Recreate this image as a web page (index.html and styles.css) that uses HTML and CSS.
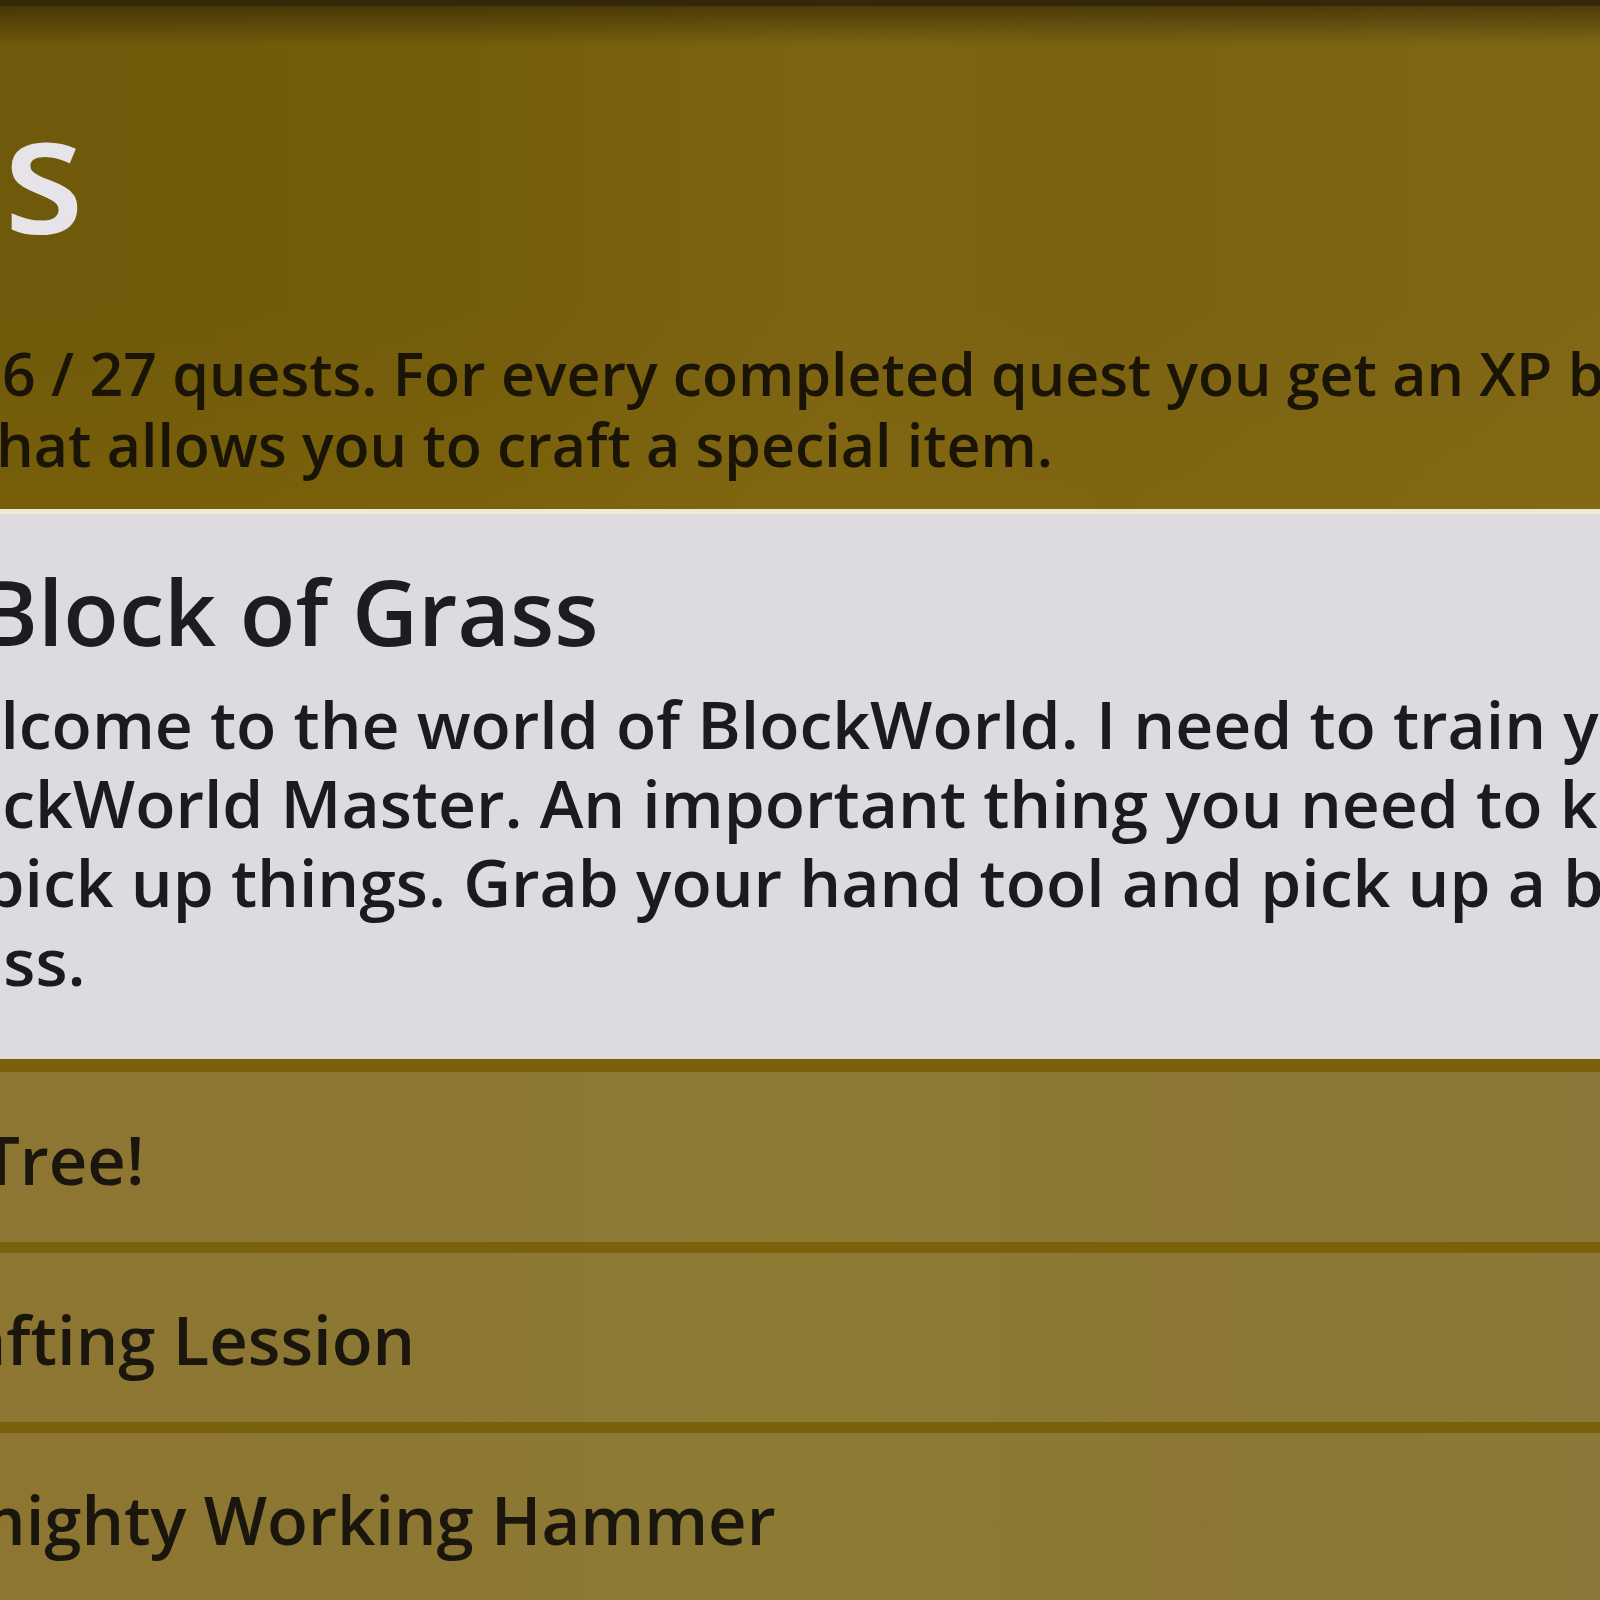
FILE: index.html
```html
<!DOCTYPE html>
<html lang="en">
<head>
<meta charset="utf-8">
<title>Quests</title>
<link rel="stylesheet" href="styles.css">
</head>
<body>
<div class="screen">
  <header class="top">
    <div class="title-wrap"><h1 class="title">Quests</h1></div>
    <p class="intro">6 / 27 quests. For every completed quest you get an XP bonus<br>that allows you to craft a special item.</p>
  </header>
  <section class="card">
    <h2 class="card-title">Block of Grass</h2>
    <p class="card-text">Welcome to the world of BlockWorld. I need to train you to become a<br>BlockWorld Master. An important thing you need to know is how<br>to pick up things. Grab your hand tool and pick up a block of<br>grass.</p>
  </section>
  <ul class="quest-list">
    <li class="quest-row"><span class="quest-label cut-tree">Tree!</span></li>
    <li class="quest-row"><span class="quest-label cut-craft">Crafting Lession</span></li>
    <li class="quest-row"><span class="quest-label cut-hammer">A mighty Working Hammer</span></li>
  </ul>
</div>
</body>
</html>
```
FILE: styles.css
```css
html, body {
  margin: 0;
  padding: 0;
}

body {
  width: 1600px;
  height: 1600px;
  overflow: hidden;
  background: #8b7632;
  font-family: "Open Sans", "DejaVu Sans", sans-serif;
}

.screen {
  display: flex;
  flex-direction: column;
  width: 1600px;
}

.top {
  border-top: 6px solid #35280a;
  padding: 81px 0 29px;
  background:
    linear-gradient(180deg, rgba(45, 32, 4, 0.6) 0, rgba(45, 32, 4, 0) 40px),
    linear-gradient(180deg, rgba(0, 0, 0, 0) 60%, rgba(140, 110, 10, 0.25) 100%),
    linear-gradient(90deg, #6f590a 0%, #745d0c 30%, #7d6413 52%, #7a6212 70%, #806717 100%);
}

.title-wrap {
  display: flex;
  justify-content: flex-end;
  width: 84px;
}

.title {
  margin: 0;
  font-size: 165px;
  line-height: 165px;
  font-weight: 600;
  color: #e6e4e8;
  white-space: nowrap;
}

.intro {
  margin: 86px 0 0 -27px;
  text-indent: 29px;
  font-size: 59px;
  line-height: 71px;
  font-weight: 600;
  color: #191406;
  white-space: nowrap;
}

.card {
  background: #dddbdf;
  border-top: 5px solid #efe8d3;
  border-bottom: 13px solid #7a610a;
  padding: 48px 0 59px;
}

.card-title {
  margin: 0 0 23px -22px;
  font-size: 91px;
  line-height: 99px;
  font-weight: 600;
  color: #1e1c1f;
  white-space: nowrap;
}

.card-text {
  margin: 0 0 0 -100px;
  font-size: 66px;
  line-height: 79px;
  font-weight: 600;
  color: #1c1a1c;
  white-space: nowrap;
}

.quest-list {
  list-style: none;
  margin: 0;
  padding: 0;
}

.quest-row {
  display: flex;
  align-items: center;
  height: 166px;
  padding-top: 3px;
  box-sizing: content-box;
  border-bottom: 11px solid #7a610b;
  background: linear-gradient(90deg, #8d7631 0%, #8c7833 30%, #8d7b34 50%, #8b7733 75%, #8c7838 100%);
}

.quest-row:first-child {
  height: 167px;
}

.quest-label {
  font-size: 67px;
  line-height: 166px;
  font-weight: 600;
  color: #1a160e;
  white-space: nowrap;
}

.cut-tree {
  margin-left: -18px;
}

.cut-craft {
  margin-left: -104px;
}

.cut-hammer {
  margin-left: -100px;
}
```
